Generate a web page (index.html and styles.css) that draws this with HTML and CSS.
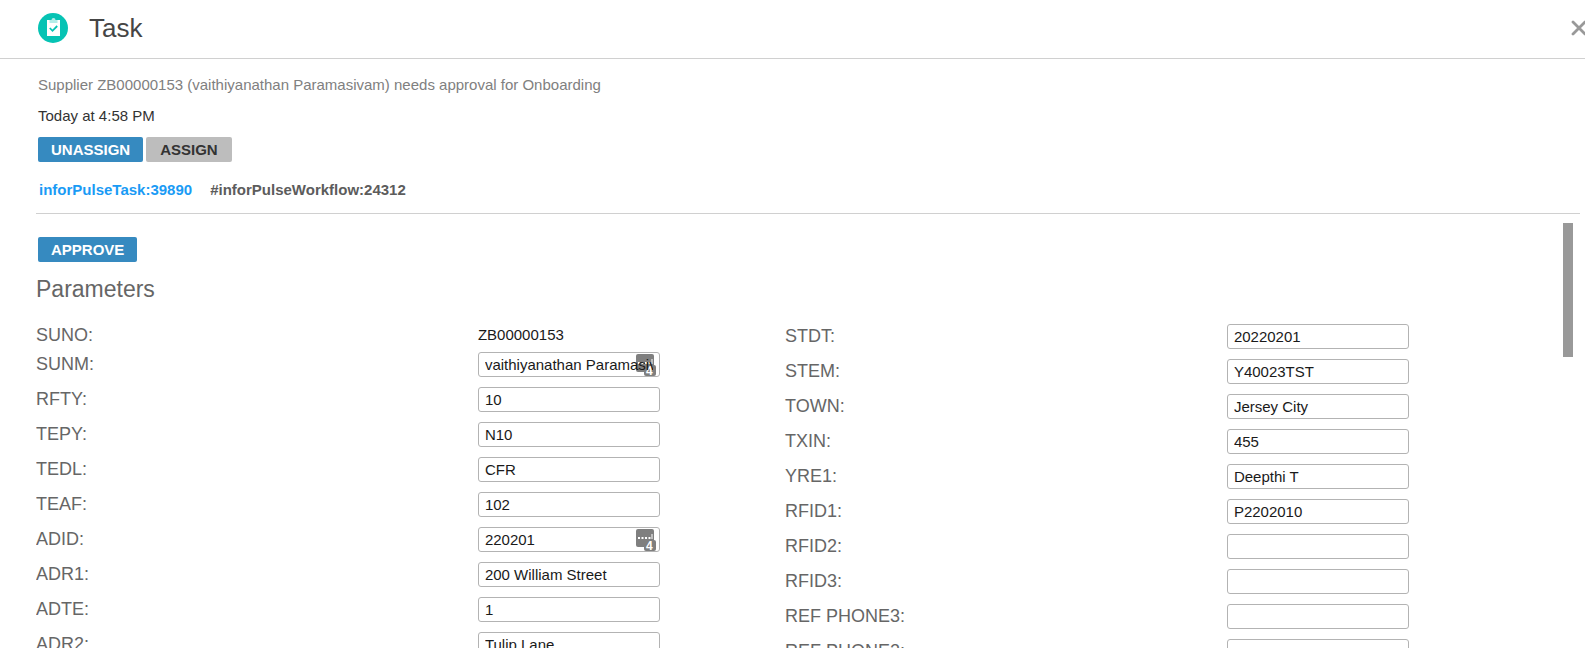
FILE: index.html
```html
<!DOCTYPE html>
<html lang="en">
<head>
<meta charset="utf-8">
<title>Task</title>
<link rel="stylesheet" href="styles.css">
</head>
<body>
<header class="header">
  <svg class="header-icon" viewBox="0 0 30 30" aria-hidden="true">
    <circle cx="15" cy="15" r="15" fill="#06c3b4"/>
    <path d="M9 7h13v16H9z" fill="#fff"/>
    <path d="M11.500 7h2a2 2 0 0 1 4 0h2v3h-8z" fill="#b4ede8"/>
    <path d="M11.800 15l2.700 2.800 4.700-4.800" fill="none" stroke="#06c3b4" stroke-width="1.800"/>
  </svg>
  <h1 class="title">Task</h1>
  <button class="close" type="button" aria-label="Close">
    <svg viewBox="0 0 16 16"><path d="M2 2l12 12M14 2L2 14" stroke="#999" stroke-width="2.800" stroke-linecap="round"/></svg>
  </button>
</header>
<section class="summary">
  <p class="message">Supplier ZB00000153 (vaithiyanathan Paramasivam) needs approval for Onboarding</p>
  <p class="time">Today at 4:58 PM</p>
  <div class="actions">
    <button class="btn" type="button">UNASSIGN</button>
    <button class="btn btn-grey" type="button">ASSIGN</button>
  </div>
  <div class="tags">
    <a class="task-link" href="#task">inforPulseTask:39890</a>
    <span>#inforPulseWorkflow:24312</span>
  </div>
</section>
<main class="details">
  <div class="content">
    <button class="btn approve" type="button">APPROVE</button>
    <h2 class="subtitle">Parameters</h2>
    <form class="columns">
      <div class="column">
        <div class="row row-static"><span class="label">SUNO:</span><span class="value">ZB00000153</span></div>
        <div class="row"><label class="label" for="sunm">SUNM:</label><div class="field"><svg class="hint" viewBox="0 0 20 22"><rect width="18" height="18" rx="2" fill="#7f7f7f"/><path d="M2 8h2v2H2zM5.500 8h2v2h-2zM9 8h2v2H9zM12.500 8h2v2h-2zM15.500 5h1v5h-1z" fill="#fff"/><rect x="8" y="11" width="12" height="11" rx="2" fill="#7f7f7f"/><text class="hint-count" x="10" y="21">4</text></svg><input class="input" id="sunm" value="vaithiyanathan Paramasivam"></div></div>
        <div class="row"><label class="label" for="rfty">RFTY:</label><div class="field"><input class="input" id="rfty" value="10"></div></div>
        <div class="row"><label class="label" for="tepy">TEPY:</label><div class="field"><input class="input" id="tepy" value="N10"></div></div>
        <div class="row"><label class="label" for="tedl">TEDL:</label><div class="field"><input class="input" id="tedl" value="CFR"></div></div>
        <div class="row"><label class="label" for="teaf">TEAF:</label><div class="field"><input class="input" id="teaf" value="102"></div></div>
        <div class="row"><label class="label" for="adid">ADID:</label><div class="field"><svg class="hint" viewBox="0 0 20 22"><rect width="18" height="18" rx="2" fill="#7f7f7f"/><path d="M2 8h2v2H2zM5.500 8h2v2h-2zM9 8h2v2H9zM12.500 8h2v2h-2zM15.500 5h1v5h-1z" fill="#fff"/><rect x="8" y="11" width="12" height="11" rx="2" fill="#7f7f7f"/><text class="hint-count" x="10" y="21">4</text></svg><input class="input" id="adid" value="220201"></div></div>
        <div class="row"><label class="label" for="adr1">ADR1:</label><div class="field"><input class="input" id="adr1" value="200 William Street"></div></div>
        <div class="row"><label class="label" for="adte">ADTE:</label><div class="field"><input class="input" id="adte" value="1"></div></div>
        <div class="row"><label class="label" for="adr2">ADR2:</label><div class="field"><input class="input" id="adr2" value="Tulip Lane"></div></div>
      </div>
      <div class="column column-second">
        <div class="row"><label class="label" for="stdt">STDT:</label><div class="field"><input class="input" id="stdt" value="20220201"></div></div>
        <div class="row"><label class="label" for="stem">STEM:</label><div class="field"><input class="input" id="stem" value="Y40023TST"></div></div>
        <div class="row"><label class="label" for="town">TOWN:</label><div class="field"><input class="input" id="town" value="Jersey City"></div></div>
        <div class="row"><label class="label" for="txin">TXIN:</label><div class="field"><input class="input" id="txin" value="455"></div></div>
        <div class="row"><label class="label" for="yre1">YRE1:</label><div class="field"><input class="input" id="yre1" value="Deepthi T"></div></div>
        <div class="row"><label class="label" for="rfid1">RFID1:</label><div class="field"><input class="input" id="rfid1" value="P2202010"></div></div>
        <div class="row"><label class="label" for="rfid2">RFID2:</label><div class="field"><input class="input" id="rfid2"></div></div>
        <div class="row"><label class="label" for="rfid3">RFID3:</label><div class="field"><input class="input" id="rfid3"></div></div>
        <div class="row"><label class="label" for="phone3">REF PHONE3:</label><div class="field"><input class="input" id="phone3"></div></div>
        <div class="row"><label class="label" for="phone2">REF PHONE2:</label><div class="field"><input class="input" id="phone2"></div></div>
      </div>
    </form>
  </div>
  <div class="scrollbar"><div class="thumb"></div></div>
</main>
</body>
</html>
```
FILE: styles.css
```css
* { box-sizing: border-box; }

body {
  margin: 0;
  height: 100vh;
  padding-bottom: 24px;
  display: flex;
  flex-direction: column;
  overflow: hidden;
  background: #fff;
  color: #333;
  font: 15px/20px "Liberation Sans", Arial, sans-serif;
}

h1, h2, p { margin: 0; font-weight: 400; }

button, input { font: inherit; }

.header {
  display: flex;
  align-items: center;
  flex: none;
  padding: 13px 0 15px 38px;
  border-bottom: 1px solid #d0d0d0;
  overflow: hidden;
}

.header-icon { width: 30px; height: 30px; }

.title {
  margin-left: 21px;
  font-size: 26px;
  line-height: 30px;
  color: #454545;
}

.close {
  margin-left: auto;
  margin-right: -2px;
  width: 16px;
  height: 16px;
  padding: 0;
  border: 0;
  background: none;
}

.close svg { display: block; }

.summary {
  flex: none;
  margin: 0 5px 0 36px;
  padding: 16px 2px 13px;
  border-bottom: 1px solid #d0d0d0;
}

.message { color: #808080; }

.time { margin-top: 11px; }

.actions {
  display: flex;
  gap: 3px;
  margin-top: 11px;
}

.btn {
  height: 25px;
  padding: 0 13px;
  border: 0;
  border-radius: 2px;
  background: #368ac0;
  color: #fff;
  font-weight: 700;
  line-height: 25px;
}

.btn-grey {
  padding: 0 14px;
  background: #bdbdbd;
  color: #333;
}

.tags {
  display: flex;
  gap: 18px;
  margin-top: 18px;
  padding-left: 1px;
  color: #5c5c5c;
  font-weight: 700;
}

.task-link {
  color: #1a9bf5;
  text-decoration: none;
}

.details {
  flex: 1;
  min-height: 0;
  display: flex;
  justify-content: space-between;
  padding: 9px 12px 0 36px;
}

.content {
  flex: 1;
  margin-right: 29px;
  overflow: hidden;
}

.approve {
  display: block;
  margin: 14px 0 0 2px;
}

.subtitle {
  margin-top: 12px;
  font-size: 23px;
  line-height: 30px;
  color: #666;
}

.columns {
  display: grid;
  grid-template-columns: 1fr 1fr;
  margin-top: 19px;
}

.column {
  display: flex;
  flex-direction: column;
  gap: 10px;
}

.column-second { padding-top: 1px; }

.row {
  display: grid;
  grid-template-columns: 59fr 41fr;
  height: 25px;
}

.row-static { height: 19px; }

.label {
  font-size: 18px;
  line-height: 24px;
  color: #666;
}

.value {
  line-height: 24px;
  color: #1a1a1a;
}

.field {
  position: relative;
  width: 182px;
  height: 25px;
}

.input {
  position: relative;
  display: block;
  width: 100%;
  height: 25px;
  padding: 0 6px;
  border: 1px solid #b3b3b3;
  border-radius: 3px;
  background: transparent;
  color: #1a1a1a;
}

.hint {
  position: absolute;
  top: 2px;
  right: 4px;
  width: 20px;
  height: 22px;
}

.hint-count {
  fill: #fff;
  font-size: 12px;
  font-weight: 700;
}

.scrollbar { width: 10px; }

.thumb {
  height: 31.5%;
  background: #999;
}
```
